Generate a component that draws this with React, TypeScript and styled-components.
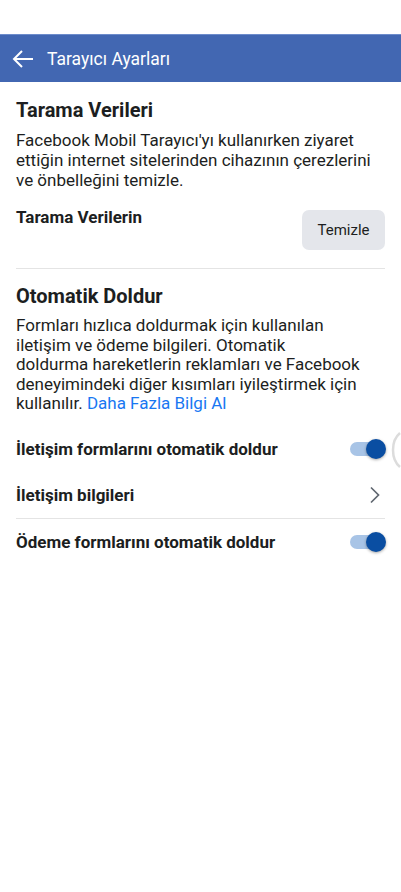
import styled, { createGlobalStyle } from "styled-components"

const GlobalStyle = createGlobalStyle`
    body {
        margin: 0;
        background: #ffffff;
        font-family: Roboto, "Liberation Sans", Arial, sans-serif;
        color: #1c1e21;
    }
`

const Page = styled.div`
    width: 401px;
    min-height: 892px;
    padding-top: 34px;
    box-sizing: border-box;
    position: relative;
    overflow: hidden;
`

const Header = styled.header`
    height: 48px;
    background-color: #4267b2;
    border-top: 1px solid #6d8ccb;
    box-sizing: border-box;
    display: flex;
    align-items: center;
    padding-left: 12px;
    gap: 13px;
    color: #ffffff;
`

const HeaderTitle = styled.h1`
    margin: 0;
    font-size: 17.5px;
    font-weight: 400;
`

const Content = styled.main`
    padding: 16px 16px 0;
`

const SectionTitle = styled.h2`
    margin: 0;
    font-size: 20px;
    line-height: 24px;
    font-weight: 700;
`

const Paragraph = styled.p<{ $lh?: number }>`
    margin: 8px 0 0;
    font-size: 17px;
    line-height: ${p => p.$lh ?? 20}px;
    color: #1c1e21;
    white-space: nowrap;
`

const Link = styled.a`
    color: #1877f2;
    text-decoration: none;
`

const ClearRow = styled.div`
    display: flex;
    justify-content: space-between;
    align-items: flex-start;
    margin-top: 17px;
`

const RowLabel = styled.span`
    font-size: 17px;
    line-height: 20px;
    font-weight: 700;
`

const ClearButton = styled.button`
    margin-top: 3px;
    width: 83px;
    height: 40px;
    border: none;
    border-radius: 7px;
    background-color: #e4e6eb;
    font-family: inherit;
    font-size: 15px;
    color: #1c1e21;
    cursor: pointer;
`

const Divider = styled.hr<{ $mt?: number; $mb?: number }>`
    border: none;
    height: 1px;
    background-color: #e4e4e4;
    margin: ${p => p.$mt ?? 0}px 0 ${p => p.$mb ?? 0}px;
`

const SettingList = styled.div`
    margin-top: 12px;
`

const SettingRow = styled.div`
    height: 46px;
    display: flex;
    align-items: center;
    justify-content: space-between;
    position: relative;
`

const SettingLabel = styled.span`
    font-size: 17px;
    font-weight: 700;
`

const Toggle = styled.span`
    position: relative;
    width: 36px;
    height: 20px;
    display: inline-block;
    margin-right: -1px;
    &::before {
        content: "";
        position: absolute;
        left: 0;
        top: 3px;
        width: 34px;
        height: 14px;
        border-radius: 7px;
        background-color: #a8c4e6;
    }
    &::after {
        content: "";
        position: absolute;
        right: 0;
        top: 0;
        width: 20px;
        height: 20px;
        border-radius: 50%;
        background-color: #0a4ea2;
        box-shadow: 0 1px 3px rgba(0, 0, 0, 0.35);
    }
`

const EdgeArc = styled.svg`
    position: absolute;
    right: -16px;
    top: 6px;
`

const ChevronIcon = styled.svg`
    margin-right: 4px;
`

const Chevron = () => (
    <ChevronIcon width="14" height="18" viewBox="0 0 14 18">
        <path d="M4 1.5 L11.5 9 L4 16.5" fill="none" stroke="#606770" strokeWidth="1.7" />
    </ChevronIcon>
)

const App = () => {
    return (
        <Page>
            <GlobalStyle />
            <Header>
                <svg width="22" height="20" viewBox="0 0 22 20">
                    <path d="M21 10 H2 M10 2 L2 10 L10 18" fill="none" stroke="#ffffff" strokeWidth="2" />
                </svg>
                <HeaderTitle>Tarayıcı Ayarları</HeaderTitle>
            </Header>
            <Content>
                <SectionTitle>Tarama Verileri</SectionTitle>
                <Paragraph>
                    Facebook Mobil Tarayıcı'yı kullanırken ziyaret<br />
                    ettiğin internet sitelerinden cihazının çerezlerini<br />
                    ve önbelleğini temizle.
                </Paragraph>
                <ClearRow>
                    <RowLabel>Tarama Verilerin</RowLabel>
                    <ClearButton>Temizle</ClearButton>
                </ClearRow>
                <Divider $mt={18} $mb={15} />
                <SectionTitle>Otomatik Doldur</SectionTitle>
                <Paragraph $lh={19.5}>
                    Formları hızlıca doldurmak için kullanılan<br />
                    iletişim ve ödeme bilgileri. Otomatik<br />
                    doldurma hareketlerin reklamları ve Facebook<br />
                    deneyimindeki diğer kısımları iyileştirmek için<br />
                    kullanılır. <Link href="#">Daha Fazla Bilgi Al</Link>
                </Paragraph>
                <SettingList>
                    <SettingRow>
                        <SettingLabel>İletişim formlarını otomatik doldur</SettingLabel>
                        <Toggle />
                        <EdgeArc width="10" height="36" viewBox="0 0 10 36">
                            <path d="M9 1 C3 6 2 12 2 18 C2 24 3 30 9 35" fill="none" stroke="#dcdcdc" strokeWidth="2.5" />
                        </EdgeArc>
                    </SettingRow>
                    <SettingRow>
                        <SettingLabel>İletişim bilgileri</SettingLabel>
                        <Chevron />
                    </SettingRow>
                    <Divider />
                    <SettingRow>
                        <SettingLabel>Ödeme formlarını otomatik doldur</SettingLabel>
                        <Toggle />
                    </SettingRow>
                </SettingList>
            </Content>
        </Page>
    )
}

export default App
